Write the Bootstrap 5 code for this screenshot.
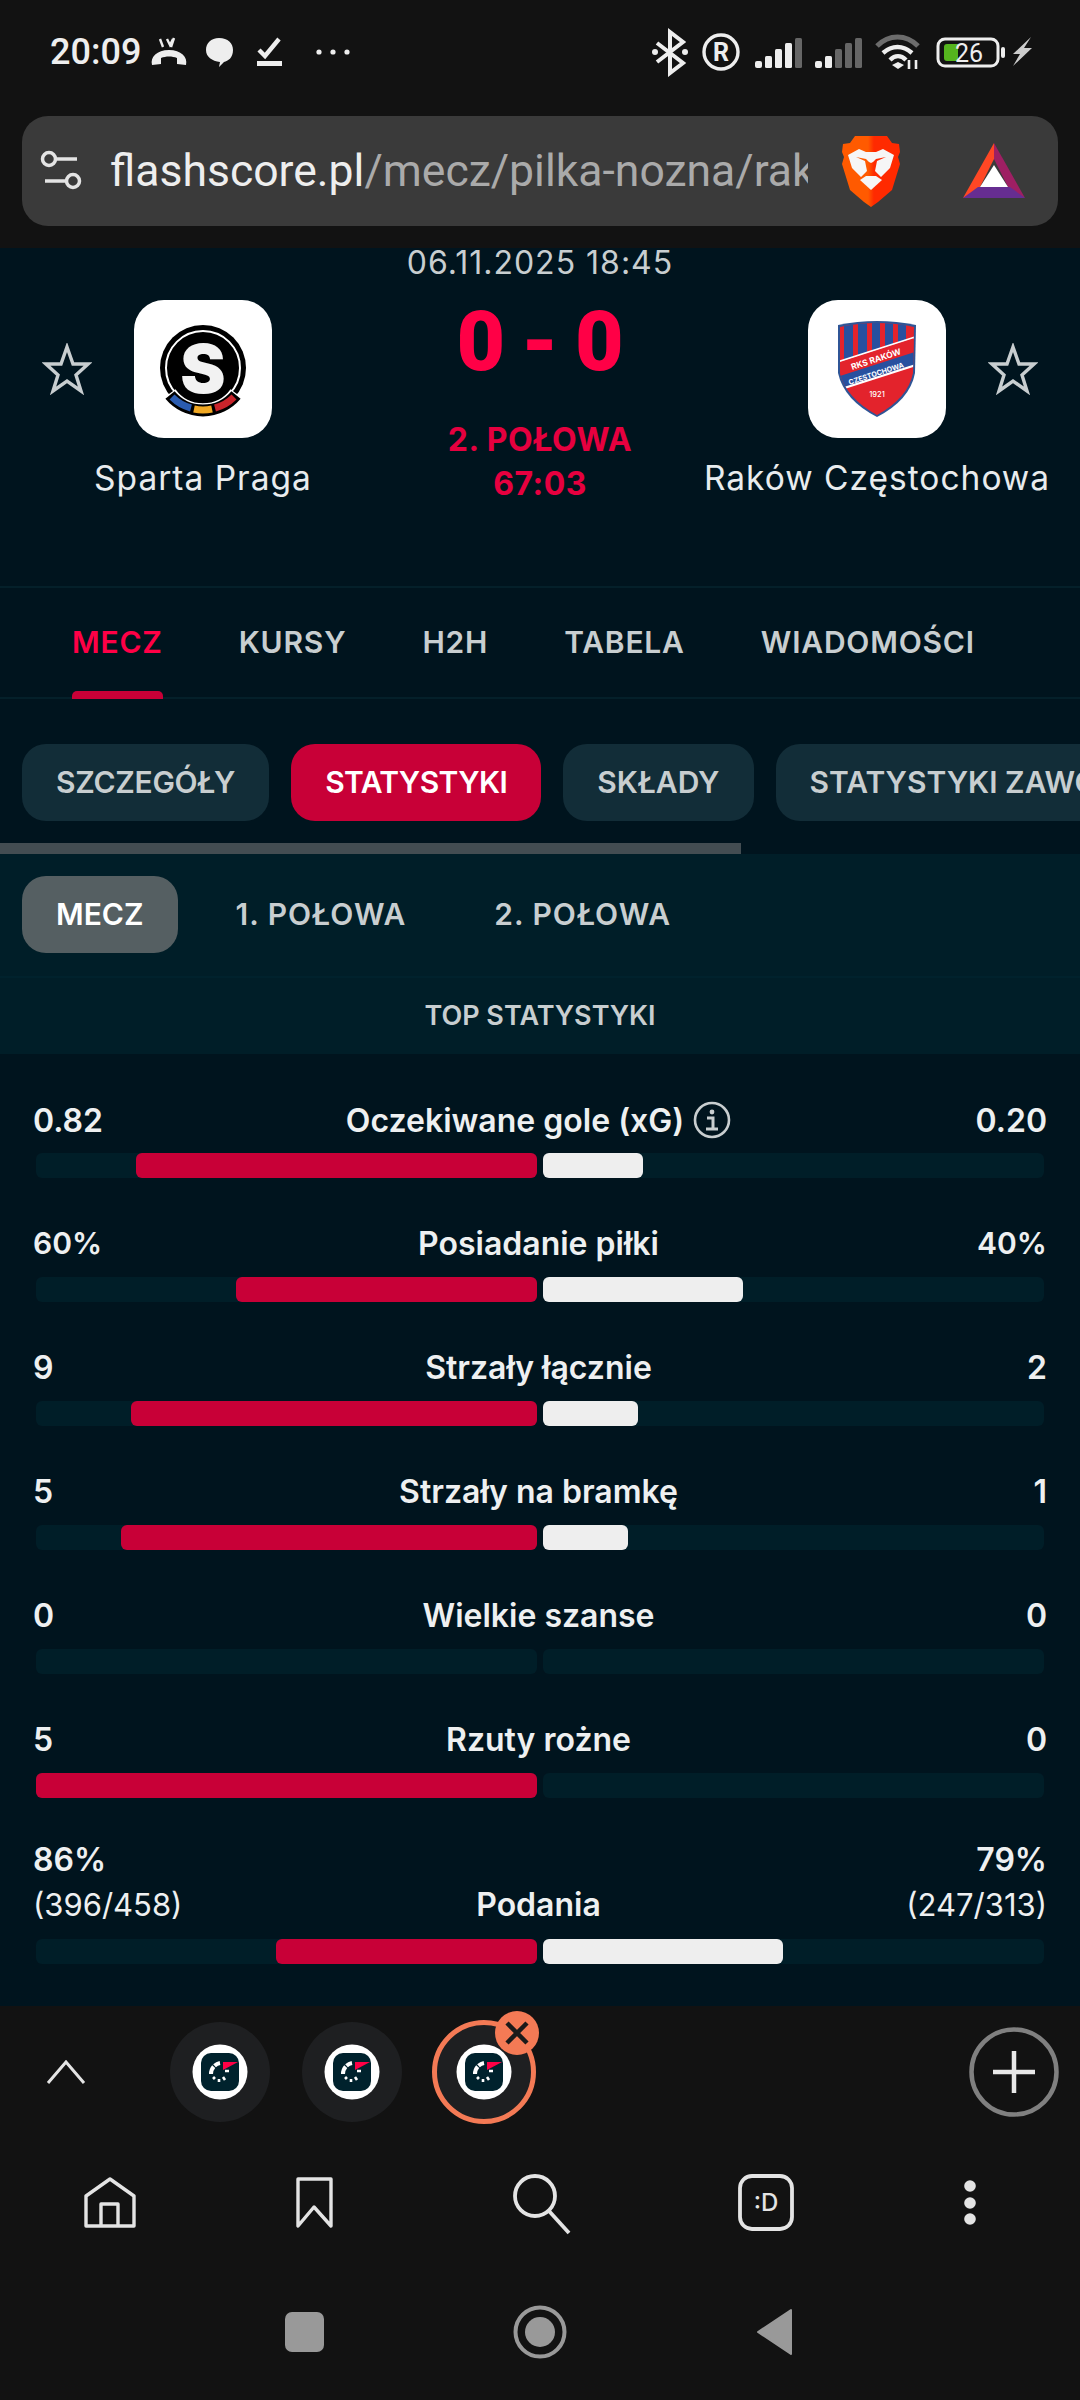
<!DOCTYPE html>
<html lang="pl">
<head>
<meta charset="UTF-8">
<meta name="viewport" content="width=device-width, initial-scale=1.0">
<title>Sparta Praga - Raków Częstochowa</title>
<link rel="stylesheet" href="https://cdn.jsdelivr.net/npm/bootstrap@5.3.0/dist/css/bootstrap.min.css">
<style>
body { background: #121212; margin: 0; font-family: Inter, "Noto Sans", sans-serif; }
.screen { width: 1080px; height: 2400px; overflow: hidden; background: #121212; }
.statusbar { height: 116px; padding: 0 36px 12px 50px; }
.clock { font-family: Roboto, sans-serif; font-size: 36px; font-weight: 500; color: #eee; width: 92px; }
.urlbar { height: 110px; margin: 0 22px; background: #3a3a3a; border-radius: 26px; padding: 0 32px 0 18px; }
.urltext { font-family: Roboto, sans-serif; font-size: 44.5px; line-height: 60px; color: #aaa; width: 698px; margin-left: 26px; margin-right: 33px; overflow: hidden; white-space: nowrap; flex: none; }
.urltext b { font-weight: 400; color: #eee; }
.app { height: 1758px; margin-top: 22px; background: #00141e; overflow: hidden; }
.matchdate { height: 32px; line-height: 30px; font-size: 32px; letter-spacing: 1px; color: #c8ced0; text-align: center; }
.matchhead { height: 306px; padding-top: 20px; }
.team { width: 406px; display: grid; grid-template-columns: 134px 138px 134px; align-content: start; align-items: center; justify-items: center; }
.crest { width: 138px; height: 138px; background: #fff; border-radius: 30px; display: block; }
.teamname { grid-column: 1 / 4; height: 40px; line-height: 40px; margin-top: 20px; font-size: 33.5px; color: #e8ecee; white-space: nowrap; letter-spacing: 1px; }
.midcol { width: 268px; text-align: center; color: #e6003f; }
.scoreline { height: 84px; line-height: 84px; font-family: Roboto, sans-serif; font-size: 84px; font-weight: 900; color: #ff0046; white-space: nowrap; }
.scoreline i { font-style: normal; margin: 0 16px; }
.phase { height: 44px; line-height: 44px; font-size: 32px; font-weight: 700; letter-spacing: .5px; }
.phase-first { margin-top: 34px; }
.maintabs { height: 113px; border-top: 2px solid #04202a; border-bottom: 2px solid #04202a; padding-left: 72px; gap: 76px; flex-wrap: nowrap; }
.maintabs .nav-link { padding: 0; height: 109px; line-height: 109px; font-size: 30px; font-weight: 600; letter-spacing: .8px; color: #c8ced0; position: relative; white-space: nowrap; }
.maintabs .nav-link.active { color: #ff0046; }
.maintabs .nav-link.active::after { content: ""; position: absolute; left: 0; right: 0; bottom: -2px; height: 8px; background: #c80037; border-radius: 5px 5px 0 0; }
.chiprow { height: 77px; padding-left: 22px; gap: 22px; }
.chiprow-top { margin-top: 45px; overflow: hidden; }
.chip { flex: none; height: 77px; padding: 0 34px; border: 0; border-radius: 24px; font-size: 30px; font-weight: 600; line-height: 77px; color: #c8ced0; white-space: nowrap; background: transparent; }
.chip-dark { background: #122d38; }
.chip-tight { letter-spacing: -.3px; }
.chip-red { background: #c80037; color: #fff; letter-spacing: -.6px; }
.chip-grey { background: #555f62; color: #fff; }
.chip-plain { letter-spacing: 1px; }
.chip-shifted { margin-left: 2px; margin-right: -2px; }
.scrollthumb { width: 741px; height: 11px; margin-top: 22px; background: #434d52; }
.subpanel { background: #001e28; }
.subtabs { padding: 22px 0 22px 22px; height: 122px; }
.sectionhead { height: 78px; line-height: 76px; border-top: 2px solid #00222d; text-align: center; font-size: 27px; font-weight: 600; color: #c8ced0; }
.stats { padding: 47px 36px 0 33px; }
.statrow { margin-bottom: 47px; }
.stathead { display: grid; grid-template-columns: 1fr auto 1fr; align-items: end; font-size: 32px; font-weight: 600; color: #eef0f1; line-height: 37px; height: 40px; padding-bottom: 3px; margin-bottom: 12px; }
.stathead > :last-child { text-align: right; margin-right: -3px; }
.stathead-tall { height: 90px; margin-top: -8px; margin-bottom: 12px; line-height: 45px; padding-bottom: 0; }
.stathead-tall small { font-size: 31px; font-weight: 400; display: block; }
.statpct { font-size: 30px; }
.statname { display: flex; align-items: center; gap: 9px; }
.bars { margin-left: 3px; gap: 6px; }
.track { width: 501px; height: 25px; background: #001e28; border-radius: 6px; display: flex; }
.track-home { justify-content: flex-end; }
.fill-home { background: #c80037; border-radius: 6px; }
.fill-away { background: #eee; border-radius: 6px; }
.tabstrip { height: 132px; padding: 0 21px 0 46px; }
.tabcircle { width: 100px; height: 100px; border-radius: 50%; background: #1e1f21; flex: none; margin-right: 32px; position: relative; }
.tabcircle svg { display: block; }
.tabcircle-on { outline: 5px solid #f47a55; outline-offset: -3px; }
.closebadge { position: absolute; left: 61px; top: -11px; width: 44px; height: 44px; }
.chevron { margin-right: 84px; }
.navicons { height: 130px; display: grid; grid-template-columns: 220px 188px 264px 188px 220px; justify-items: center; align-items: center; }
.sysnav { height: 132px; gap: 175px; padding-bottom: 4px; }
.ghostcell { width: 50px; height: 52px; }
</style>
</head>
<body>
<svg width="0" height="0" class="position-absolute">
  <symbol id="favicon" viewBox="0 0 100 100">
    <circle cx="50" cy="50" r="27.5" fill="#fff"/>
    <rect x="31" y="31" width="38" height="38" rx="10" fill="#00222d"/>
    <path d="M53 40h15l-15 8z" fill="#ff0046"/>
    <path d="M41 52a11 11 0 0 1 9-11" fill="none" stroke="#fff" stroke-width="4" stroke-dasharray="8 1.2"/>
    <path d="M43 57l2-2M49 60v-3M55 58l-2-3M59 49h-4" stroke="#fff" stroke-width="2.6" fill="none"/>
  </symbol>
  <symbol id="star" viewBox="0 0 50 52">
    <path d="M25 4l6 17h15L34 32l5 16-14-10-14 10 5-16L4 21h15z" fill="none" stroke="#c8ced0" stroke-width="3.4" stroke-linejoin="miter"/>
  </symbol>
</svg>
<div class="screen d-flex flex-column">

  <div class="statusbar d-flex align-items-center flex-none">
    <span class="clock">20:09</span>
    <svg width="208" height="40" viewBox="142 32 208 40" class="flex-none">
      <path d="M152 65c-2-8 5-15 17-15s19 7 17 15l-9-1v-6c-5-2-11-2-16 0v6z" fill="#eee"/>
      <path d="M160 39l3 8M174 38l-3 9M167 39l3 6 3-6" stroke="#eee" stroke-width="2.4" fill="none"/>
      <path d="M219 38c9 0 14 5 14 12 0 8-5 11-9 12l-5 5 1-5c-8-1-14-5-14-12s5-12 13-12z" fill="#eee"/>
      <path d="M259 50l6 6 14-17" stroke="#eee" stroke-width="4.4" fill="none"/>
      <rect x="257" y="61" width="25" height="5" fill="#eee"/>
      <g fill="#eee"><circle cx="319" cy="52" r="2.6"/><circle cx="333" cy="52" r="2.6"/><circle cx="347" cy="52" r="2.6"/></g>
    </svg>
    <svg width="396" height="50" viewBox="648 26 396 50" class="ms-auto flex-none">
      <path d="M657 42l26 20-13 10V31l13 10-26 20" fill="none" stroke="#eee" stroke-width="4"/>
      <circle cx="655" cy="51" r="3" fill="#eee"/><circle cx="685" cy="51" r="3" fill="#eee"/>
      <circle cx="721" cy="51" r="17" fill="none" stroke="#eee" stroke-width="3.4"/>
      <text x="721" y="60" text-anchor="middle" font-family="Roboto, sans-serif" font-size="25" font-weight="700" fill="#eee">R</text>
      <g fill="#eee"><rect x="755" y="60" width="7" height="7" rx="2"/><rect x="765" y="55" width="7" height="12" rx="1.5"/><rect x="775" y="48" width="7" height="19" rx="1.5"/><rect x="785" y="42" width="7" height="25" rx="1.5"/></g>
      <rect x="795" y="37" width="7" height="30" rx="1.5" fill="#666"/>
      <rect x="815" y="60" width="7" height="7" rx="2" fill="#eee"/><rect x="825" y="55" width="7" height="12" rx="1.5" fill="#eee"/>
      <g fill="#666"><rect x="835" y="48" width="7" height="19" rx="1.5"/><rect x="845" y="42" width="7" height="25" rx="1.5"/><rect x="855" y="37" width="7" height="30" rx="1.5"/></g>
      <path d="M877 45c12-12 29-12 41 0" fill="none" stroke="#6c6c6c" stroke-width="5"/>
      <path d="M883 52c9-8 20-8 29 0M890 59c5-5 11-5 16 0" fill="none" stroke="#eee" stroke-width="4.4"/>
      <path d="M892 64l6-3 6 3-6 4z" fill="#eee"/>
      <path d="M909 68v-9M916 68v-9" stroke="#eee" stroke-width="2.6"/>
      <rect x="938" y="38" width="60" height="27" rx="7" fill="none" stroke="#eee" stroke-width="3"/>
      <path d="M947 43h11v17h-11a3 3 0 0 1-3-3V46a3 3 0 0 1 3-3z" fill="#55b41e"/>
      <text x="955" y="61" font-family="Roboto, sans-serif" font-size="25" fill="#eee">26</text>
      <rect x="1001" y="46" width="4" height="11" rx="2" fill="#eee"/>
      <path d="M1031 36l-18 17h7l-7 12 19-18h-8z" fill="#ccc"/>
    </svg>
  </div>

  <div class="urlbar d-flex align-items-center flex-none">
    <svg width="44" height="44" viewBox="0 0 44 44" class="flex-none">
      <g fill="none" stroke="#e4e4e4" stroke-width="3.5"><circle cx="9" cy="10" r="6.5"/><path d="M16 10h21M5 32h21"/><circle cx="33" cy="32" r="6.5"/></g>
    </svg>
    <div class="urltext"><b>flashscore.pl</b>/mecz/pilka-nozna/rak</div>
    <svg width="60" height="72" viewBox="0 0 60 72" class="me-auto flex-none">
      <defs><linearGradient id="bravefill" x1="0" x2="1" y1="0" y2="0"><stop offset=".45" stop-color="#ff5a00"/><stop offset=".55" stop-color="#ff2a00"/></linearGradient></defs>
      <path d="M14 1h32l5 7 7 1 1 8-2 5 2 7-8 26-14 12-7 5-7-5L9 55 1 29l2-7-2-5 1-8 7-1z" fill="url(#bravefill)"/>
      <path d="M7 20l11-6 7 3h10l7-3 11 6-4 13-9 9-6-6 2-10 9-4-10 2-3 3-2 1-2-1-3-3-10-2 9 4 2 10-6 6-9-9z" fill="#f6f6f6"/>
      <path d="M19 45l6-4h10l6 4-11 10z" fill="#f6f6f6"/>
    </svg>
    <svg width="64" height="58" viewBox="0 0 64 58" class="flex-none">
      <path d="M32 1L1 56l15-7 16-32z" fill="#ff4724"/>
      <path d="M32 1l31 55-15-7-16-32z" fill="#9e1f63"/>
      <path d="M1 56h62L48 45H16z" fill="#662d91"/>
      <path d="M32 23l14 22H18z" fill="#fff"/>
    </svg>
  </div>

  <div class="app flex-none">
    <div class="matchdate">06.11.2025 18:45</div>
    <div class="matchhead d-flex">
      <div class="team">
        <svg width="50" height="52"><use href="#star"/></svg>
        <svg class="crest" viewBox="0 0 138 138">
          <circle cx="69" cy="68" r="43" fill="#000"/>
          <circle cx="69" cy="68" r="37" fill="none" stroke="#fff" stroke-width="2"/>
          <text x="69" y="93" text-anchor="middle" font-family="Inter, sans-serif" font-size="68" font-weight="900" fill="#f2f2f2">S</text>
          <path d="M35 94A42 42 0 0 0 103 94" fill="none" stroke="#fff" stroke-width="16"/>
          <path d="M36 95A43 43 0 0 0 102 95" fill="none" stroke="#000" stroke-width="12"/>
          <path d="M38 97A42 42 0 0 0 57 108" fill="none" stroke="#2b5cb0" stroke-width="7"/>
          <path d="M60 109A42 42 0 0 0 78 109" fill="none" stroke="#f0a823" stroke-width="7"/>
          <path d="M81 108A42 42 0 0 0 100 97" fill="none" stroke="#c8242b" stroke-width="7"/>
        </svg>
        <div class="ghostcell"></div>
        <div class="teamname">Sparta Praga</div>
      </div>
      <div class="midcol">
        <div class="scoreline">0<i>-</i>0</div>
        <div class="phase phase-first">2. POŁOWA</div>
        <div class="phase">67:03</div>
      </div>
      <div class="team">
        <div class="ghostcell"></div>
        <svg class="crest" viewBox="0 0 138 138">
          <defs><clipPath id="shieldclip"><path d="M32 27Q69 19 106 27L105 73Q100 98 69 115Q38 98 32 73z"/></clipPath></defs>
          <path d="M30 25Q69 17 108 25L107 73Q102 100 69 117Q36 100 30 73z" fill="#2f5596"/>
          <g clip-path="url(#shieldclip)">
            <rect x="30" y="20" width="80" height="100" fill="#e3232c"/>
            <path d="M36 20h9v46h-9zM50 20h9v42h-9zM64 20h8v38h-8zM77 20h8v34h-8zM90 20h8v30h-8z" fill="#27509f"/>
            <path d="M30 62L108 37" stroke="#fff" stroke-width="2" fill="none"/>
            <path d="M30 70.500L108 45.500" stroke="#e3232c" stroke-width="15" fill="none"/>
            <path d="M30 83L108 58" stroke="#27509f" stroke-width="12" fill="none"/>
            <path d="M30 90L108 65" stroke="#fff" stroke-width="2" fill="none"/>
          </g>
          <g font-family="Inter, sans-serif" font-weight="700" fill="#fff" text-anchor="middle">
            <text x="69" y="62" font-size="8.500" transform="rotate(-18 69 62)">RKS RAKÓW</text>
            <text x="69" y="76" font-size="7.200" transform="rotate(-18 69 76)">CZĘSTOCHOWA</text>
            <text x="69" y="97" font-size="7.500" font-weight="500">1921</text>
          </g>
        </svg>
        <svg width="50" height="52"><use href="#star"/></svg>
        <div class="teamname">Raków Częstochowa</div>
      </div>
    </div>

    <ul class="nav maintabs">
      <li class="nav-item"><a class="nav-link active" href="#">MECZ</a></li>
      <li class="nav-item"><a class="nav-link" href="#">KURSY</a></li>
      <li class="nav-item"><a class="nav-link" href="#">H2H</a></li>
      <li class="nav-item"><a class="nav-link" href="#">TABELA</a></li>
      <li class="nav-item"><a class="nav-link" href="#">WIADOMOŚCI</a></li>
    </ul>

    <div class="chiprow chiprow-top d-flex">
      <button class="btn chip chip-dark chip-tight">SZCZEGÓŁY</button>
      <button class="btn chip chip-red">STATYSTYKI</button>
      <button class="btn chip chip-dark">SKŁADY</button>
      <button class="btn chip chip-dark">STATYSTYKI ZAWODNIKÓW</button>
    </div>
    <div class="scrollthumb"></div>

    <div class="subpanel">
      <div class="chiprow subtabs d-flex">
        <button class="btn chip chip-grey">MECZ</button>
        <button class="btn chip chip-plain chip-shifted">1. POŁOWA</button>
        <button class="btn chip chip-plain">2. POŁOWA</button>
      </div>
      <div class="sectionhead">TOP STATYSTYKI</div>
    </div>

    <div class="stats">
      <div class="statrow">
        <div class="stathead"><span>0.82</span><span class="statname">Oczekiwane gole (xG)
          <svg width="38" height="38" viewBox="0 0 38 38"><circle cx="19" cy="19" r="17" fill="none" stroke="#c8ced0" stroke-width="2.6"/><circle cx="19" cy="11" r="2.4" fill="#c8ced0"/><path d="M14 17h6v10M13 28h12" fill="none" stroke="#c8ced0" stroke-width="3"/></svg>
        </span><span>0.20</span></div>
        <div class="bars d-flex"><div class="track track-home"><div class="fill-home" style="width:80%"></div></div><div class="track"><div class="fill-away" style="width:20%"></div></div></div>
      </div>
      <div class="statrow">
        <div class="stathead"><span class="statpct">60%</span><span class="statname">Posiadanie piłki</span><span class="statpct">40%</span></div>
        <div class="bars d-flex"><div class="track track-home"><div class="fill-home" style="width:60%"></div></div><div class="track"><div class="fill-away" style="width:40%"></div></div></div>
      </div>
      <div class="statrow">
        <div class="stathead"><span>9</span><span class="statname">Strzały łącznie</span><span>2</span></div>
        <div class="bars d-flex"><div class="track track-home"><div class="fill-home" style="width:81%"></div></div><div class="track"><div class="fill-away" style="width:19%"></div></div></div>
      </div>
      <div class="statrow">
        <div class="stathead"><span>5</span><span class="statname">Strzały na bramkę</span><span>1</span></div>
        <div class="bars d-flex"><div class="track track-home"><div class="fill-home" style="width:83%"></div></div><div class="track"><div class="fill-away" style="width:17%"></div></div></div>
      </div>
      <div class="statrow">
        <div class="stathead"><span>0</span><span class="statname">Wielkie szanse</span><span>0</span></div>
        <div class="bars d-flex"><div class="track track-home"></div><div class="track"></div></div>
      </div>
      <div class="statrow">
        <div class="stathead"><span>5</span><span class="statname">Rzuty rożne</span><span>0</span></div>
        <div class="bars d-flex"><div class="track track-home"><div class="fill-home" style="width:100%"></div></div><div class="track"></div></div>
      </div>
      <div class="statrow">
        <div class="stathead stathead-tall"><span>86%<small>(396/458)</small></span><span class="statname">Podania</span><span>79%<small>(247/313)</small></span></div>
        <div class="bars d-flex"><div class="track track-home"><div class="fill-home" style="width:52.1%"></div></div><div class="track"><div class="fill-away" style="width:47.9%"></div></div></div>
      </div>
    </div>
  </div>

  <div class="tabstrip d-flex align-items-center flex-none">
    <svg class="chevron flex-none" width="40" height="24" viewBox="0 0 40 24"><path d="M2 23L20 2l18 21" fill="none" stroke="#e4e4e4" stroke-width="3"/></svg>
    <div class="tabcircle"><svg width="100" height="100"><use href="#favicon"/></svg></div>
    <div class="tabcircle"><svg width="100" height="100"><use href="#favicon"/></svg></div>
    <div class="tabcircle tabcircle-on"><svg width="100" height="100"><use href="#favicon"/></svg>
      <svg class="closebadge" viewBox="0 0 44 44"><circle cx="22" cy="22" r="22" fill="#f47a55"/><path d="M12 12l20 20M32 12L12 32" stroke="#1a1a1a" stroke-width="4.500"/></svg>
    </div>
    <svg class="ms-auto flex-none" width="90" height="90" viewBox="0 0 90 90"><circle cx="45" cy="45" r="42.500" fill="none" stroke="#808080" stroke-width="4.500"/><path d="M45 24v42M24 45h42" stroke="#e8e8e8" stroke-width="4.500"/></svg>
  </div>

  <div class="navicons flex-none">
    <svg width="60" height="60" viewBox="0 0 60 60"><g fill="none" stroke="#e4e4e4" stroke-width="3.400" stroke-linejoin="round"><path d="M6 53V23L30 6l24 17v30z"/><path d="M21 53V31h17v22"/></g></svg>
    <svg width="60" height="60" viewBox="0 0 60 60"><path d="M14 6h33v47L30 34 14 53z" fill="none" stroke="#e4e4e4" stroke-width="3.400" stroke-linejoin="round"/></svg>
    <svg width="64" height="64" viewBox="0 0 64 64"><g fill="none" stroke="#e4e4e4" stroke-width="3.800"><circle cx="27" cy="25" r="20"/><path d="M41 40l20 22"/></g></svg>
    <svg width="60" height="60" viewBox="0 0 60 60"><rect x="4" y="3" width="52" height="53" rx="12" fill="none" stroke="#e4e4e4" stroke-width="3.800"/><text x="30" y="38" text-anchor="middle" font-family="Inter, sans-serif" font-size="24" font-weight="500" fill="#e4e4e4">:D</text></svg>
    <svg width="20" height="50" viewBox="0 0 20 50"><g fill="#e4e4e4"><circle cx="10" cy="8" r="5.800"/><circle cx="10" cy="25" r="5.800"/><circle cx="10" cy="41" r="5.800"/></g></svg>
  </div>

  <div class="sysnav d-flex align-items-center justify-content-center flex-none">
    <svg width="60" height="60" viewBox="0 0 60 60"><rect x="10" y="10" width="39" height="40" rx="7" fill="#999"/></svg>
    <svg width="60" height="60" viewBox="0 0 60 60"><circle cx="30" cy="30" r="24.500" fill="none" stroke="#999" stroke-width="4"/><circle cx="30" cy="30" r="15" fill="#999"/></svg>
    <svg width="60" height="60" viewBox="0 0 60 60"><path d="M46 8v44L13 30z" fill="#999" stroke="#999" stroke-width="2" stroke-linejoin="round"/></svg>
  </div>
</div>
<script src="https://cdn.jsdelivr.net/npm/bootstrap@5.3.0/dist/js/bootstrap.bundle.min.js"></script>
</body>
</html>
